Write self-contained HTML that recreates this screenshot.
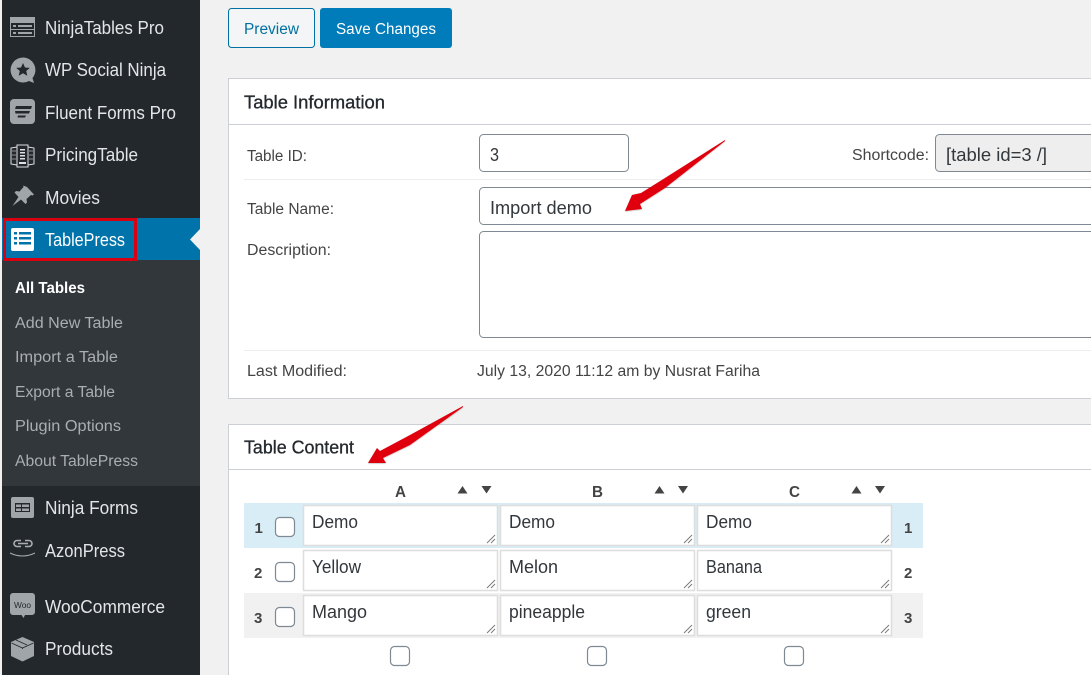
<!DOCTYPE html>
<html><head><meta charset="utf-8"><title>TablePress</title>
<style>
html,body{margin:0;padding:0;background:#f1f1f1;width:1091px;height:675px;overflow:hidden}
svg{display:block}
text{font-family:"Liberation Sans",sans-serif;white-space:pre}
.m{font-size:18.5px;fill:#e4e5e6}
.s{font-size:15.5px;fill:#a9aeb3}
.l{font-size:15.5px;fill:#444}
.v{font-size:18px;fill:#32373c}
.h{font-size:18px;fill:#23282d;stroke:#23282d;stroke-width:.3}
.b{font-size:15px;font-weight:bold;fill:#444}
.c{font-size:18px;fill:#32373c}
.ic{fill:#a0a5aa}
.box{fill:#fff;stroke:#7e8993}
.ta{fill:#fff;stroke:#ddd;stroke-width:1.5}
.cb{fill:#fff;stroke:#7e8993;stroke-width:1.2}
.rz{stroke:#777;stroke-width:.9;fill:none}
</style></head><body>
<svg width="1091" height="675" viewBox="0 0 1091 675" xmlns="http://www.w3.org/2000/svg">
<defs><filter id="sh" x="-10%" y="-10%" width="120%" height="130%"><feDropShadow dx="0" dy=".6" stdDeviation=".6" flood-color="#000" flood-opacity=".3"/></filter></defs>
<rect width="1091" height="675" fill="#f1f1f1"/>
<!-- sidebar -->
<rect x="2" y="0" width="198" height="675" fill="#23282d"/>
<rect x="2" y="218" width="198" height="42" fill="#0073aa"/>
<rect x="2" y="260" width="198" height="226" fill="#32373c"/>
<path d="M200 229L190 239.500L200 250Z" fill="#f1f1f1"/>

<!-- icons -->
<path class="ic" fill-rule="evenodd" d="M10 17h25v20H10ZM11 23v6h23v-6ZM11 30v6h23v-6ZM13 25h3v2h-3ZM18 25h14v2H18ZM13 32h3v2h-3ZM18 32h14v2H18Z"/>
<path class="ic" fill-rule="evenodd" d="M23 57.500a12.500 12.500 0 1 0 6 23.500l5 2-1.500-5A12.500 12.500 0 0 0 23 57.500ZM23 63l2 4.500 4.800.4-3.600 3.100 1.100 4.700L23 73.200l-4.300 2.500 1.100-4.700-3.600-3.100 4.800-.4Z"/>
<path class="ic" d="M14 99h17a4 4 0 0 1 4 4v17a4 4 0 0 1-4 4H14a4 4 0 0 1-4-4v-17a4 4 0 0 1 4-4Z"/>
<path fill="#23282d" d="M16 106h16l-1 3H15ZM15 111h15l-1 2.500H15.500ZM18 115.500h8l-1 2h-7.500Z"/>
<g fill="none" stroke="#dfe0e1" stroke-width="1">
<path d="M17 147l-6 1v16l6 1M28 147l6 1v16l-6 1"/>
<path d="M17 145h11v22H17Z"/>
<path d="M12 151h4M12 155h4M12 159h4M29 151h4M29 155h4M29 159h4" stroke="#8d9195"/>
</g>
<path d="M20 149h5v1.500h-5ZM20 152h5v1.500h-5ZM20 155h5v1.500h-5ZM20 158h5v1.500h-5ZM19 162h7v2h-7Z" fill="#dfe0e1"/>
<path class="ic" d="M27 187l7 7.500-1.500 1-1.500-.5-4.500 4 .5 3.500-1.500 1.500-4.500-4.500-8.500 6.500 6-9-4-4.500 1.500-1.500 3.500.5 4-4.500-.3-1.500Z"/>
<path fill-rule="evenodd" fill="#fff" d="M13 228h19a2 2 0 0 1 2 2v19a2 2 0 0 1-2 2H13a2 2 0 0 1-2-2v-19a2 2 0 0 1 2-2ZM14 232v2.500h3V232ZM19 232v2.500h12V232ZM14 237v2.500h3V237ZM19 237v2.500h12V237ZM14 242v2.500h3V242ZM19 242v2.500h12V242Z"/>
<path class="ic" fill-rule="evenodd" d="M13 497h19a2 2 0 0 1 2 2v17a2 2 0 0 1-2 2H13a2 2 0 0 1-2-2v-17a2 2 0 0 1 2-2ZM15 503v9h15v-9ZM16 504.500h5v2.500h-5ZM16 508.500h5v2.500h-5ZM22 504.500h7v2.500h-7ZM22 508.500h7v2.500h-7Z"/>
<g fill="none" stroke="#a9adb1" stroke-width="1.600"><path d="M21 546.500h-4a3 3 0 0 1 0-6h4M25 540.500h4a3 3 0 0 1 0 6h-4M18 543.500h10"/><path stroke-width="1" d="M10 553q12.500 6 25 0"/></g>
<path class="ic" d="M13 593h19a3 3 0 0 1 3 3v16a3 3 0 0 1-3 3h-7l-1.500 3-2-3H13a3 3 0 0 1-3-3v-16a3 3 0 0 1 3-3Z"/>
<text x="14" y="608" font-size="8" fill="#23282d" textLength="17" lengthAdjust="spacingAndGlyphs">Woo</text>
<path class="ic" d="M22.500 637l11.500 5v14l-11.500 5.500L11 656v-14Z"/>
<path d="M11.500 643l11 5 11-5M22.500 648v1M16 640l11 5" stroke="#23282d" stroke-width=".8" fill="none"/>

<!-- menu text -->
<text class="m" x="45" y="34" textLength="119" lengthAdjust="spacingAndGlyphs">NinjaTables Pro</text>
<text class="m" x="45" y="76" textLength="121" lengthAdjust="spacingAndGlyphs">WP Social Ninja</text>
<text class="m" x="45" y="119" textLength="131" lengthAdjust="spacingAndGlyphs">Fluent Forms Pro</text>
<text class="m" x="45" y="161" textLength="93" lengthAdjust="spacingAndGlyphs">PricingTable</text>
<text class="m" x="45" y="204" textLength="55" lengthAdjust="spacingAndGlyphs">Movies</text>
<text class="m" x="45" y="246" textLength="80" lengthAdjust="spacingAndGlyphs" style="fill:#fff">TablePress</text>
<text class="s" x="15" y="293" textLength="70" lengthAdjust="spacingAndGlyphs" style="fill:#fff;font-weight:bold">All Tables</text>
<text class="s" x="15" y="328" textLength="108" lengthAdjust="spacingAndGlyphs">Add New Table</text>
<text class="s" x="15" y="362" textLength="103" lengthAdjust="spacingAndGlyphs">Import a Table</text>
<text class="s" x="15" y="397" textLength="100" lengthAdjust="spacingAndGlyphs">Export a Table</text>
<text class="s" x="15" y="431" textLength="106" lengthAdjust="spacingAndGlyphs">Plugin Options</text>
<text class="s" x="15" y="466" textLength="123" lengthAdjust="spacingAndGlyphs">About TablePress</text>
<text class="m" x="45" y="514" textLength="93" lengthAdjust="spacingAndGlyphs">Ninja Forms</text>
<text class="m" x="45" y="557" textLength="80" lengthAdjust="spacingAndGlyphs">AzonPress</text>
<text class="m" x="45" y="613" textLength="120" lengthAdjust="spacingAndGlyphs">WooCommerce</text>
<text class="m" x="45" y="655" textLength="68" lengthAdjust="spacingAndGlyphs">Products</text>
<rect x="4.500" y="219.500" width="131" height="40" fill="none" stroke="#d9000f" stroke-width="3"/>

<!-- buttons -->
<rect x="228.500" y="8.500" width="86" height="39" rx="3" fill="#f3f5f6" stroke="#0071a1"/>
<text x="244" y="34" font-size="15.500" fill="#0071a1" textLength="55" lengthAdjust="spacingAndGlyphs">Preview</text>
<rect x="320" y="8" width="132" height="40" rx="3" fill="#007cba"/>
<text x="336" y="34" font-size="15.500" fill="#fff" textLength="100" lengthAdjust="spacingAndGlyphs">Save Changes</text>

<!-- card 1 -->
<path d="M1091 78.500H228.500V398.500H1091Z" fill="#fff"/>
<path d="M1091 78.500H228.500V398.500H1091" fill="none" stroke="#ccd0d4"/>
<path d="M229 124.500H1091" stroke="#ccd0d4"/>
<text class="h" x="244" y="108.500" textLength="141" lengthAdjust="spacingAndGlyphs">Table Information</text>
<path d="M244 179.500H1091M244 350.500H1091" stroke="#eee"/>
<text class="l" x="247" y="161" textLength="60" lengthAdjust="spacingAndGlyphs">Table ID:</text>
<rect class="box" x="479.500" y="134.500" width="149" height="37" rx="4"/>
<text class="v" x="490" y="161" textLength="9" lengthAdjust="spacingAndGlyphs">3</text>
<text class="l" x="852" y="160" textLength="77" lengthAdjust="spacingAndGlyphs">Shortcode:</text>
<path d="M1091 134.500H939.500a4 4 0 0 0-4 4v29a4 4 0 0 0 4 4H1091" fill="#eee" stroke="#7e8993"/>
<text class="v" x="946" y="161" textLength="101" lengthAdjust="spacingAndGlyphs">[table id=3 /]</text>
<text class="l" x="247" y="214" textLength="87" lengthAdjust="spacingAndGlyphs">Table Name:</text>
<path class="box" d="M1091 187.500H483.500a4 4 0 0 0-4 4v29a4 4 0 0 0 4 4H1091"/>
<text class="v" x="490" y="214" textLength="102" lengthAdjust="spacingAndGlyphs">Import demo</text>
<text class="l" x="247" y="255" textLength="84" lengthAdjust="spacingAndGlyphs">Description:</text>
<path class="box" d="M1091 231.500H483.500a4 4 0 0 0-4 4v98a4 4 0 0 0 4 4H1091"/>
<text class="l" x="247" y="376" textLength="100" lengthAdjust="spacingAndGlyphs">Last Modified:</text>
<text class="l" x="477" y="376" textLength="283" lengthAdjust="spacingAndGlyphs">July 13, 2020 11:12 am by Nusrat Fariha</text>

<!-- card 2 -->
<path d="M1091 424.500H228.500V675H1091Z" fill="#fff"/>
<path d="M1091 424.500H228.500V675" fill="none" stroke="#ccd0d4"/>
<path d="M229 469.500H1091" stroke="#ccd0d4"/>
<text class="h" x="244" y="453.500" textLength="110" lengthAdjust="spacingAndGlyphs">Table Content</text>

<text class="b" x="395" y="497" textLength="11" lengthAdjust="spacingAndGlyphs" style="font-size:16px">A</text>
<text class="b" x="592" y="497" textLength="11" lengthAdjust="spacingAndGlyphs" style="font-size:16px">B</text>
<text class="b" x="789" y="497" textLength="11" lengthAdjust="spacingAndGlyphs" style="font-size:16px">C</text>
<path fill="#444" d="M457.500 493.500l5-7.500 5 7.500ZM481.500 486h10l-5 7.500ZM654.500 493.500l5-7.500 5 7.500ZM678 486h10l-5 7.500ZM851.500 493.500l5-7.500 5 7.500ZM875 486h10l-5 7.500Z"/>

<rect x="244" y="503" width="679" height="45" fill="#d9edf7"/>
<rect x="244" y="593" width="679" height="45" fill="#f1f1f1"/>

<rect class="ta" x="303.500" y="505.500" width="194" height="40"/>
<rect class="ta" x="500.500" y="505.500" width="194" height="40"/>
<rect class="ta" x="697.500" y="505.500" width="194" height="40"/>
<rect class="ta" x="303.500" y="550.500" width="194" height="40"/>
<rect class="ta" x="500.500" y="550.500" width="194" height="40"/>
<rect class="ta" x="697.500" y="550.500" width="194" height="40"/>
<rect class="ta" x="303.500" y="595.500" width="194" height="40"/>
<rect class="ta" x="500.500" y="595.500" width="194" height="40"/>
<rect class="ta" x="697.500" y="595.500" width="194" height="40"/>

<path class="rz" d="M487 543l8-8M491 543l4-4M684 543l8-8M688 543l4-4M881 543l8-8M885 543l4-4M487 588l8-8M491 588l4-4M684 588l8-8M688 588l4-4M881 588l8-8M885 588l4-4M487 633l8-8M491 633l4-4M684 633l8-8M688 633l4-4M881 633l8-8M885 633l4-4"/>

<text class="c" x="312" y="528" textLength="46" lengthAdjust="spacingAndGlyphs">Demo</text>
<text class="c" x="509" y="528" textLength="46" lengthAdjust="spacingAndGlyphs">Demo</text>
<text class="c" x="706" y="528" textLength="46" lengthAdjust="spacingAndGlyphs">Demo</text>
<text class="c" x="312" y="573" textLength="49" lengthAdjust="spacingAndGlyphs">Yellow</text>
<text class="c" x="509" y="573" textLength="49" lengthAdjust="spacingAndGlyphs">Melon</text>
<text class="c" x="706" y="573" textLength="56" lengthAdjust="spacingAndGlyphs">Banana</text>
<text class="c" x="312" y="618" textLength="55" lengthAdjust="spacingAndGlyphs">Mango</text>
<text class="c" x="509" y="618" textLength="76" lengthAdjust="spacingAndGlyphs">pineapple</text>
<text class="c" x="706" y="618" textLength="45" lengthAdjust="spacingAndGlyphs">green</text>

<text class="b" x="254.500" y="533">1</text><text class="b" x="254" y="578">2</text><text class="b" x="254" y="623">3</text>
<text class="b" x="904" y="533">1</text><text class="b" x="904" y="578">2</text><text class="b" x="904" y="623">3</text>

<rect class="cb" x="275.500" y="517.500" width="19" height="19" rx="4"/>
<rect class="cb" x="275.500" y="562.500" width="19" height="19" rx="4"/>
<rect class="cb" x="275.500" y="607.500" width="19" height="19" rx="4"/>
<rect class="cb" x="390.500" y="646.500" width="19" height="19" rx="4"/>
<rect class="cb" x="587.500" y="646.500" width="19" height="19" rx="4"/>
<rect class="cb" x="784.500" y="646.500" width="19" height="19" rx="4"/>

<!-- arrows -->
<g fill="#e0000f" filter="url(#sh)">
<path d="M725 140L665 178L641 193L632 195L625 211L642 209L640 204L665 188L725 141Z"/>
<path d="M463 406L410 435L380 451L377 448L368 463L386 463L383 458L410 445L463 407Z"/>
</g>
</svg>
</body></html>
